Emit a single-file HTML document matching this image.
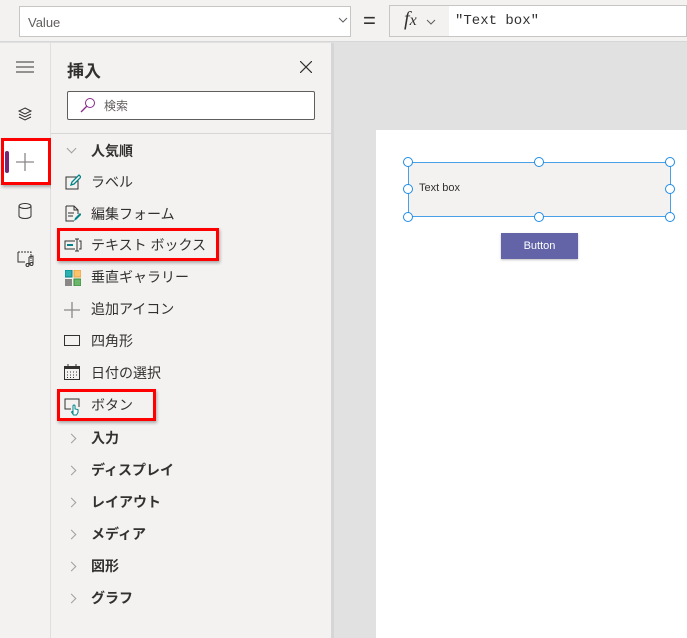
<!DOCTYPE html>
<html><head><meta charset="utf-8"><style>
*{box-sizing:border-box;margin:0;padding:0}
body{width:687px;height:638px;overflow:hidden;position:relative;background:#e1e1e1;font-family:"Liberation Sans","Noto Sans CJK JP",sans-serif;color:#323130}
.abs{position:absolute}
.top{left:0;top:0;width:687px;height:42px;background:#f3f2f1;border-bottom:1px solid #d6d6d6}
.rail{left:0;top:43px;width:51px;height:595px;background:#f3f2f1;border-right:1px solid #e1dfdd}
.panel{left:51px;top:43px;width:280px;height:595px;background:#f3f2f1}
.item{position:absolute;left:91px;font-size:14px;color:#323130;line-height:18px}
.hdr{font-weight:bold}
.chev{position:absolute;left:68px;width:7px;height:7px;border-right:1px solid #a19f9d;border-bottom:1px solid #a19f9d}
.red{position:absolute;border:3px solid #f00;box-shadow:1px 2px 3px rgba(0,0,0,.3)}
.h{position:absolute;width:10px;height:10px;border-radius:50%;border:1.5px solid #1f8ce6;background:#fff}
</style></head><body>
<div class="abs top"></div>
<div class="abs" style="left:19px;top:6px;width:332px;height:31px;background:#fff;border:1px solid #c8c6c4;font-size:13px;color:#605e5c;padding:8px 8px">Value</div>
<svg class="abs" style="left:338px;top:17px" width="10" height="6"><path d="M1 1l4 4 4-4" stroke="#605e5c" fill="none"/></svg>
<div class="abs" style="left:363px;top:8px;font-size:22px;color:#323130">=</div>
<div class="abs" style="left:389px;top:5px;width:61px;height:32px;background:#f3f2f1;border:1px solid #c8c6c4"></div>
<div class="abs" style="left:404px;top:8px;font-family:'Liberation Serif',serif;font-style:italic;font-size:20px">f<span style="font-size:16px">x</span></div>
<svg class="abs" style="left:426px;top:19px" width="10" height="6"><path d="M1 1l4 4 4-4" stroke="#605e5c" fill="none"/></svg>
<div class="abs" style="left:449px;top:5px;width:238px;height:32px;background:#fff;border:1px solid #c8c6c4;border-left:none;font-family:'Liberation Mono',monospace;font-size:14px;padding:7px 6px">"Text box"</div>

<div class="abs rail"></div>
<svg class="abs" style="left:16px;top:61px" width="18" height="12"><path d="M0 1h18M0 6h18M0 11h18" stroke="#323130" stroke-width="1"/></svg>
<svg class="abs" style="left:17px;top:106px" width="16" height="16"><path d="M8 2l6 3-6 3-6-3zM2 8l6 3 6-3M2 11l6 3 6-3" stroke="#323130" fill="none"/></svg>
<div class="abs" style="left:0;top:139px;width:51px;height:45px;background:#fff"></div>
<div class="abs" style="left:5px;top:151px;width:4px;height:22px;background:#742774;border-radius:2px"></div>
<svg class="abs" style="left:16px;top:153px" width="18" height="18"><path d="M9 0v18M0 9h18" stroke="#8a8886" stroke-width="1.3"/></svg>
<div class="red" style="left:1px;top:138px;width:50px;height:47px"></div>
<svg class="abs" style="left:18px;top:203px" width="14" height="16"><ellipse cx="7" cy="3" rx="6" ry="2.5" stroke="#323130" fill="none"/><path d="M1 3v10a6 2.5 0 0 0 12 0V3" stroke="#323130" fill="none"/></svg>
<svg class="abs" style="left:17px;top:250px" width="18" height="18"><path d="M1 2h13v9" stroke="#323130" fill="none" stroke-dasharray="2 1"/><path d="M1 2v10h7" stroke="#323130" fill="none"/><path d="M12 7v8M12 7l4-1v8" stroke="#323130" fill="none"/><circle cx="10.5" cy="15" r="1.5" stroke="#323130" fill="none"/><circle cx="14.5" cy="14" r="1.5" stroke="#323130" fill="none"/></svg>

<div class="abs panel"></div>
<div class="abs" style="left:331px;top:43px;width:3px;height:595px;background:#d6d6d6"></div>
<div class="abs" style="left:67px;top:57px;font-size:17px;font-weight:bold">挿入</div>
<svg class="abs" style="left:300px;top:61px" width="12" height="12"><path d="M0 0l12 12M12 0L0 12" stroke="#323130" stroke-width="1.2"/></svg>
<div class="abs" style="left:67px;top:91px;width:248px;height:29px;background:#fff;border:1px solid #605e5c;border-radius:2px"></div>
<svg class="abs" style="left:80px;top:97px" width="16" height="16"><circle cx="10" cy="6" r="4.5" stroke="#8a2a8a" fill="none"/><path d="M7 9l-6 6" stroke="#8a2a8a" stroke-width="1.3"/></svg>
<div class="abs" style="left:104px;top:97px;font-size:12px;color:#605e5c">検索</div>
<div class="abs" style="left:51px;top:133px;width:280px;height:1px;background:#d6d6d6"></div>

<div class="chev" style="top:145px;transform:rotate(45deg)"></div>
<div class="item hdr" style="top:142px">人気順</div>
<svg class="abs" style="left:65px;top:174px" width="16" height="16"><rect x="1" y="3" width="12" height="12" stroke="#323130" fill="none"/><path d="M6 11l1-3 7-7 2 2-7 7z" stroke="#038387" fill="#fff" stroke-width="1.3"/></svg>
<div class="item" style="top:173px">ラベル</div>
<svg class="abs" style="left:65px;top:205px" width="16" height="18"><path d="M1 1h8l4 4v4M1 1v15h8M9 1v4h4M3 8h6M3 11h5" stroke="#323130" fill="none"/><path d="M9 16l1-3 5-5 1.5 1.5-5 5z" fill="#038387"/></svg>
<div class="item" style="top:205px">編集フォーム</div>
<svg class="abs" style="left:64px;top:238px" width="18" height="14"><path d="M11 3H1v8h10M15 3h2v8h-2" stroke="#323130" fill="none"/><rect x="3" y="6" width="6" height="2" fill="#038387"/><path d="M11 1h4M13 1v12M11 13h4" stroke="#323130"/></svg>
<div class="item" style="top:236px">テキスト ボックス</div>
<div class="red" style="left:57px;top:228px;width:162px;height:33px"></div>
<svg class="abs" style="left:65px;top:270px" width="16" height="16"><rect x="0" y="0" width="7" height="7" fill="#2bb1b1" stroke="#038387"/><rect x="9" y="0" width="7" height="7" fill="#ffc36b" stroke="#e8a23c"/><rect x="0" y="9" width="7" height="7" fill="#8a8886"/><rect x="9" y="9" width="7" height="7" fill="#6bb86b" stroke="#3a8a3a"/></svg>
<div class="item" style="top:268px">垂直ギャラリー</div>
<svg class="abs" style="left:64px;top:302px" width="16" height="16"><path d="M8 0v16M0 8h16" stroke="#8a8886" stroke-width="1.3"/></svg>
<div class="item" style="top:300px">追加アイコン</div>
<svg class="abs" style="left:64px;top:335px" width="17" height="12"><rect x=".5" y=".5" width="15" height="10" stroke="#323130" fill="none"/></svg>
<div class="item" style="top:332px">四角形</div>
<svg class="abs" style="left:64px;top:364px" width="17" height="17"><rect x=".5" y="2.5" width="15" height="13" stroke="#323130" fill="none"/><rect x="0" y="2" width="16" height="3" fill="#323130"/><path d="M4 0v3M12 0v3" stroke="#323130"/><path d="M3 8h1M6 8h1M9 8h1M12 8h1M3 11h1M6 11h1M9 11h1M12 11h1M3 13.5h1M6 13.5h1M9 13.5h1" stroke="#323130"/></svg>
<div class="item" style="top:364px">日付の選択</div>
<svg class="abs" style="left:64px;top:398px" width="18" height="18"><path d="M7 11H1V1h14v8" stroke="#323130" fill="none"/><path d="M9 16V8a1 1 0 0 1 2 0v3l3 .5v3l-1.5 2.5H9.5L7.5 14l1.5-1" stroke="#038387" fill="#fff"/></svg>
<div class="item" style="top:396px">ボタン</div>
<div class="red" style="left:57px;top:389px;width:99px;height:32px"></div>
<div class="chev" style="top:435px;transform:rotate(-45deg)"></div>
<div class="item hdr" style="top:429px">入力</div>
<div class="chev" style="top:467px;transform:rotate(-45deg)"></div>
<div class="item hdr" style="top:461px">ディスプレイ</div>
<div class="chev" style="top:499px;transform:rotate(-45deg)"></div>
<div class="item hdr" style="top:493px">レイアウト</div>
<div class="chev" style="top:531px;transform:rotate(-45deg)"></div>
<div class="item hdr" style="top:525px">メディア</div>
<div class="chev" style="top:563px;transform:rotate(-45deg)"></div>
<div class="item hdr" style="top:557px">図形</div>
<div class="chev" style="top:595px;transform:rotate(-45deg)"></div>
<div class="item hdr" style="top:589px">グラフ</div>

<div class="abs" style="left:376px;top:130px;width:311px;height:508px;background:#fff"></div>
<div class="abs" style="left:408px;top:162px;width:263px;height:55px;background:#f3f2f1;border:1.5px solid #4aa0e6"></div>
<div class="abs" style="left:419px;top:182px;font-size:11px;color:#323130">Text box</div>
<div class="h" style="left:403px;top:157px"></div><div class="h" style="left:534px;top:157px"></div><div class="h" style="left:665px;top:157px"></div>
<div class="h" style="left:403px;top:184px"></div><div class="h" style="left:665px;top:184px"></div>
<div class="h" style="left:403px;top:212px"></div><div class="h" style="left:534px;top:212px"></div><div class="h" style="left:665px;top:212px"></div>
<div class="abs" style="left:501px;top:233px;width:77px;height:26px;background:#6264a7;color:#fff;font-size:11px;text-align:center;line-height:26px;box-shadow:0 1px 2px rgba(0,0,0,.25)">Button</div>
</body></html>
